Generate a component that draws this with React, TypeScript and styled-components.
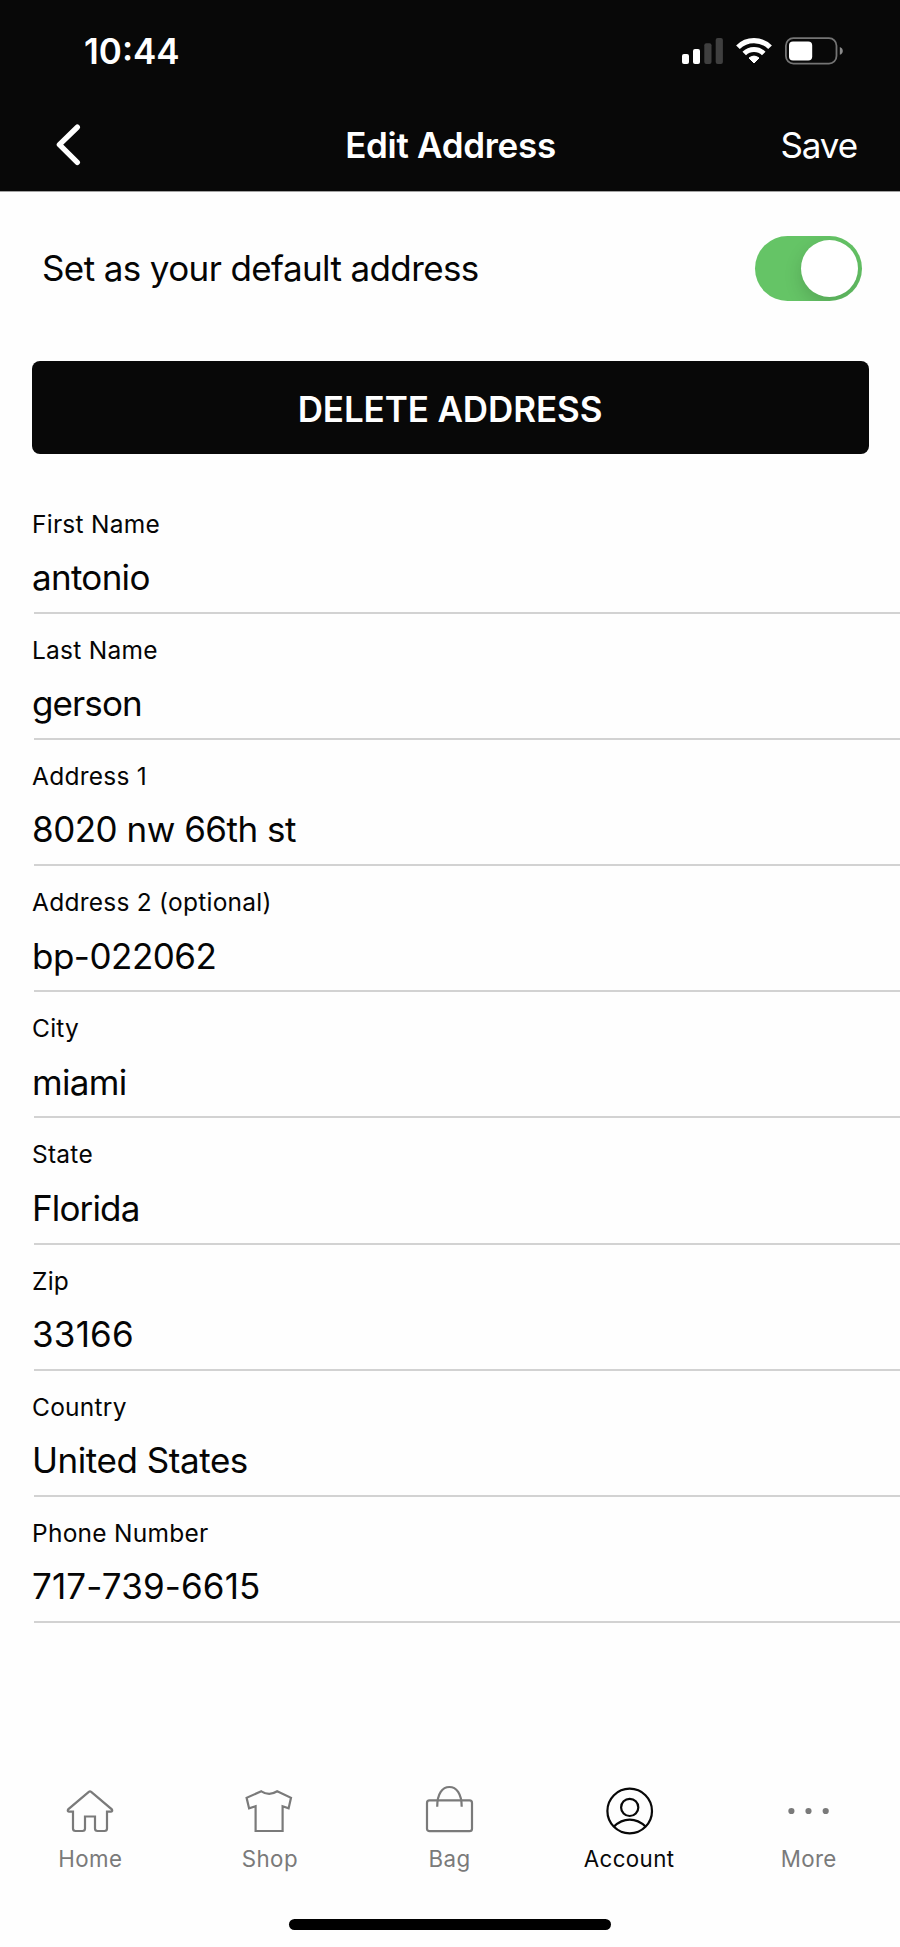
import React from 'react';
import styled, { createGlobalStyle } from 'styled-components';

const GlobalStyle = createGlobalStyle`
  * { box-sizing: border-box; }
  body {
    margin: 0;
    background: #fefefe;
    color: #050505;
    font-family: Inter, 'Liberation Sans', sans-serif;
    font-size: 35px;
  }
`;

const Screen = styled.main`
  display: flex;
  flex-direction: column;
  width: 900px;
  height: 1947px;
  overflow: hidden;
`;

const Header = styled.header`
  height: 192px;
  background: #080808;
  color: #fff;
  border-bottom: 1px solid #a2a2a2;
`;

const StatusBar = styled.div`
  display: flex;
  align-items: center;
  justify-content: space-between;
  height: 102px;
  padding: 0 57px 0 84px;
`;

const Time = styled.time`
  font-size: 35px;
  font-weight: 570;
  letter-spacing: 0;
`;

const StatusIcons = styled.div`
  display: flex;
  align-items: center;
  gap: 13px;
`;

const NavBar = styled.nav`
  display: grid;
  grid-template-columns: 1fr auto 1fr;
  align-items: center;
  height: 86px;
  padding: 0 43px 0 54px;
`;

const PlainButton = styled.button`
  display: flex;
  padding: 0;
  border: 0;
  background: none;
  color: inherit;
  font: inherit;
`;

const SaveButton = styled(PlainButton)`
  justify-self: end;
  letter-spacing: -1.1px;
`;

const Title = styled.h1`
  margin: 0 10px 0 0;
  font-size: 35px;
  font-weight: 570;
  letter-spacing: -0.3px;
`;

const DefaultRow = styled.label`
  display: flex;
  align-items: center;
  justify-content: space-between;
  height: 152px;
  padding: 0 38px 0 42px;
  letter-spacing: -0.61px;
`;

const Switch = styled.span`
  display: flex;
  align-items: center;
  justify-content: flex-end;
  width: 107px;
  height: 65px;
  padding-right: 4px;
  border-radius: 33px;
  background: #65c466;
  overflow: hidden;
`;

const Thumb = styled.span`
  width: 57px;
  height: 57px;
  border-radius: 50%;
  background: #fff;
  box-shadow: 0 7px 18px rgba(0, 0, 0, 0.15);
`;

const DeleteButton = styled.button`
  height: 93px;
  margin: 17.4px 31.5px 0;
  padding: 2px 0 0;
  border: 0;
  border-radius: 8px;
  background: #080808;
  color: #fff;
  font: inherit;
  font-weight: 570;
  letter-spacing: -0.1px;
`;

const Fields = styled.section`
  margin-top: 33.6px;
`;

const Field = styled.div`
  display: flex;
  flex-direction: column;
  height: 126.1px;
  margin-left: 34px;
  padding-top: 20px;
  border-bottom: 2px solid #d2d2d2;
`;

const FieldLabel = styled.span`
  margin-left: -2px;
  font-size: 24.5px;
  line-height: 32px;
  letter-spacing: 0.25px;
`;

const FieldValue = styled.span<{ $tracking?: number }>`
  margin: 17.3px 0 0 -2px;
  line-height: 40px;
  letter-spacing: ${(p) => p.$tracking ?? -0.7}px;
`;

const TabBar = styled.nav`
  display: grid;
  grid-template-columns: repeat(5, 1fr);
  margin-top: auto;
  padding-right: 2px;
`;

const Tab = styled.a<{ $active?: boolean }>`
  display: flex;
  flex-direction: column;
  align-items: center;
  color: ${(p) => (p.$active ? '#080808' : '#7a7a7a')};
  font-size: 22.3px;
  line-height: 30px;
  letter-spacing: 0.4px;
`;

const TabLabel = styled.span`
  padding-left: 1px;
`;

const TabIcon = styled.svg`
  width: 60px;
  height: 60px;
  margin-bottom: 3px;
  fill: none;
  stroke: currentColor;
  stroke-width: 2.2;
`;

const HomeIndicator = styled.div`
  width: 322px;
  height: 11px;
  margin: 45px auto 17px;
  border-radius: 6px;
  background: #000;
`;

const SignalIcon = () => (
  <svg width="41" height="28" viewBox="0 0 41 28">
    <rect x="0" y="17" width="7" height="10" rx="2" fill="#fff" />
    <rect x="11" y="12" width="7" height="15" rx="2" fill="#fff" />
    <rect x="22.3" y="6.3" width="7.2" height="20.7" rx="2" fill="#3f3f3f" />
    <rect x="33.7" y="1" width="7.2" height="26" rx="2" fill="#3f3f3f" />
  </svg>
);

const WifiIcon = () => (
  <svg width="36" height="28" viewBox="0 0 36 28" fill="none" stroke="#fff">
    <path d="M1.95 10.25A22.7 22.7 0 0 1 34.05 10.25" strokeWidth="5.2" />
    <path d="M8.24 16.54A13.8 13.8 0 0 1 27.76 16.54" strokeWidth="5" />
    <path d="M18 26L13 21Q18 17.2 23 21Z" fill="#fff" strokeWidth="1" strokeLinejoin="round" />
  </svg>
);

const BatteryIcon = () => (
  <svg width="58" height="28" viewBox="0 0 58 28">
    <rect x="0.9" y="1.2" width="50.6" height="25.4" rx="7.5" fill="none" stroke="#747474" strokeWidth="1.8" />
    <rect x="4" y="4.4" width="23.2" height="19" rx="4" fill="#fff" />
    <path d="M54.8 10Q57.8 11.2 57.8 13.9T54.8 17.8Z" fill="#8a8a8a" />
  </svg>
);

const BackIcon = () => (
  <svg width="28" height="44" viewBox="0 0 28 44" fill="none" stroke="#fff" strokeWidth="5.4" strokeLinecap="round" strokeLinejoin="round">
    <path d="M23.3 4.2L5.4 21.6L23.3 39.4" />
  </svg>
);

const fields = [
  { label: 'First Name', value: 'antonio' },
  { label: 'Last Name', value: 'gerson', tracking: -0.9 },
  { label: 'Address 1', value: '8020 nw 66th st', tracking: -0.5 },
  { label: 'Address 2 (optional)', value: 'bp-022062', tracking: -0.5 },
  { label: 'City', value: 'miami' },
  { label: 'State', value: 'Florida', tracking: -0.85 },
  { label: 'Zip', value: '33166', tracking: 0.2 },
  { label: 'Country', value: 'United States', tracking: -0.45 },
  { label: 'Phone Number', value: '717-739-6615', tracking: 0.15 },
];

const tabs = [
  {
    name: 'Home',
    icon: (
      <path d="M28.8 10.9Q30 10 31.2 10.9L51.8 28.3Q53 30.3 51 30.6H47V47.5Q47 50 44.5 50H37.5Q35 50 35 47.5V35.5H25V47.5Q25 50 22.5 50H15.5Q13 50 13 47.5V30.6H9Q7 30.3 8.2 28.3Z" />
    ),
  },
  {
    name: 'Shop',
    icon: (
      <path d="M22.3 10.3Q30.2 15.4 38.2 10.3L52 16.8L49.6 27.4L43.6 25.2V50H16.6V25.2L10.1 27.4L7.6 16.8Z" />
    ),
  },
  {
    name: 'Bag',
    icon: (
      <>
        <rect x="8" y="19.4" width="45" height="30.8" rx="2.5" />
        <path d="M18.2 25.8C18.2 12.5 23.5 6 30.4 6S42.7 12.5 42.7 25.8" />
      </>
    ),
  },
  {
    name: 'Account',
    active: true,
    icon: (
      <>
        <circle cx="30.7" cy="30" r="22.3" />
        <circle cx="30.7" cy="26.4" r="8.6" />
        <path d="M14.9 45.6Q22 38.6 30.7 38.6T46.6 45.6" />
      </>
    ),
  },
  {
    name: 'More',
    icon: (
      <g fill="currentColor" stroke="none">
        <circle cx="13.4" cy="30" r="3.1" />
        <circle cx="30.5" cy="30" r="3.1" />
        <circle cx="47.7" cy="30" r="3.1" />
      </g>
    ),
  },
];

export default function App() {
  return (
    <>
      <GlobalStyle />
      <Screen>
        <Header>
          <StatusBar>
            <Time>10:44</Time>
            <StatusIcons>
              <SignalIcon />
              <WifiIcon />
              <BatteryIcon />
            </StatusIcons>
          </StatusBar>
          <NavBar>
            <PlainButton aria-label="Back">
              <BackIcon />
            </PlainButton>
            <Title>Edit Address</Title>
            <SaveButton>Save</SaveButton>
          </NavBar>
        </Header>
        <DefaultRow>
          Set as your default address
          <Switch role="switch" aria-checked="true">
            <Thumb />
          </Switch>
        </DefaultRow>
        <DeleteButton>DELETE ADDRESS</DeleteButton>
        <Fields>
          {fields.map((f) => (
            <Field key={f.label}>
              <FieldLabel>{f.label}</FieldLabel>
              <FieldValue $tracking={f.tracking}>{f.value}</FieldValue>
            </Field>
          ))}
        </Fields>
        <TabBar>
          {tabs.map((t) => (
            <Tab key={t.name} $active={t.active}>
              <TabIcon viewBox="0 0 60 60">{t.icon}</TabIcon>
              <TabLabel>{t.name}</TabLabel>
            </Tab>
          ))}
        </TabBar>
        <HomeIndicator />
      </Screen>
    </>
  );
}
